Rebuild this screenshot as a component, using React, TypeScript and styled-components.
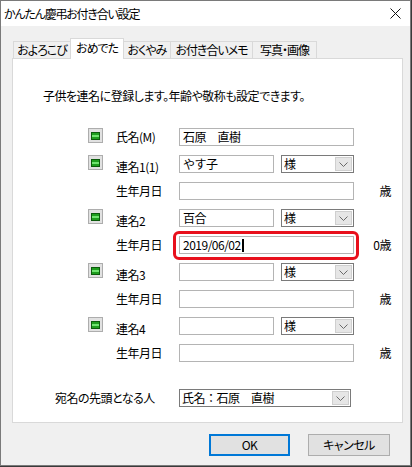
import React from "react";
import styled, { createGlobalStyle } from "styled-components";

const GlobalStyle = createGlobalStyle`
  html, body {
    margin: 0;
    padding: 0;
    background: #3a3a3a;
  }
  body {
    font-family: "Noto Sans CJK JP", "Liberation Sans", sans-serif;
    font-size: 12px;
    letter-spacing: -0.5px;
    color: #000;
  }
`;

const Window = styled.div`
  width: 411px;
  height: 466px;
  box-sizing: border-box;
  border: 1px solid #7a7a7a;
  background: #f0f0f0;
  display: flex;
  flex-direction: column;
`;

const TitleBar = styled.div`
  height: 25px;
  background: #fff;
  display: flex;
  align-items: center;
  justify-content: space-between;
  padding: 0 9px 0 3px;
`;

const Title = styled.span`
  font-size: 12px;
  letter-spacing: -1.2px;
  font-feature-settings: "palt";
  line-height: 16px;
`;

const Content = styled.div`
  padding: 12px 7px 0 11px;
`;

const TabStrip = styled.div`
  display: flex;
  align-items: flex-end;
  height: 20px;
  padding-left: 2px;
  position: relative;
  z-index: 1;
`;

const Tab = styled.div<{ $w: number; $active?: boolean }>`
  width: ${(p) => p.$w}px;
  height: ${(p) => (p.$active ? 21 : 17)}px;
  margin-bottom: ${(p) => (p.$active ? -1 : 0)}px;
  margin-left: -1px;
  box-sizing: border-box;
  border: 1px solid #d9d9d9;
  border-bottom: none;
  background: ${(p) => (p.$active ? "#fff" : "#f0f0f0")};
  display: flex;
  align-items: ${(p) => (p.$active ? "flex-start" : "center")};
  justify-content: center;
  padding-top: ${(p) => (p.$active ? 1 : 0)}px;
  font-feature-settings: "palt";
  letter-spacing: -1px;
  line-height: 16px;
  white-space: nowrap;
`;

const Panel = styled.div`
  height: 365px;
  box-sizing: border-box;
  border: 1px solid #d9d9d9;
  background: #fff;
  padding-top: 29px;
`;

const Description = styled.div`
  padding-left: 30px;
  line-height: 16px;
  font-feature-settings: "palt";
`;

const Form = styled.div`
  margin-top: 24px;
  display: flex;
  flex-direction: column;
  gap: 9px;
`;

const Row = styled.div`
  display: flex;
  align-items: center;
  height: 18px;
  padding-left: 75px;
`;

const IconSlot = styled.div`
  width: 15px;
  height: 15px;
  margin-right: 13px;
  align-self: flex-start;
  display: flex;
`;

const Label = styled.div<{ $drop?: boolean }>`
  width: 63px;
  line-height: 16px;
  margin-top: ${(p) => (p.$drop ? 6 : 0)}px;
  font-feature-settings: "palt";
  white-space: nowrap;
`;

const FieldArea = styled.div`
  width: 175px;
  display: flex;
  justify-content: space-between;
  position: relative;
`;

const Field = styled.div<{ $w?: number }>`
  width: ${(p) => (p.$w ? `${p.$w}px` : "100%")};
  height: 18px;
  box-sizing: border-box;
  border: 1px solid #b4b4b4;
  background: #fff;
  padding: 0 3px;
  display: flex;
  align-items: center;
  line-height: 16px;
  white-space: nowrap;
`;

const Caret = styled.span`
  display: inline-block;
  width: 2px;
  height: 13px;
  background: #000;
  margin-left: 1px;
`;

const Highlight = styled.div`
  position: absolute;
  left: -6px;
  right: -5px;
  top: -5px;
  bottom: -6px;
  border: 3px solid #e8101c;
  border-radius: 6px;
  pointer-events: none;
`;

const Combo = styled.div<{ $w: number }>`
  width: ${(p) => p.$w}px;
  height: 18px;
  box-sizing: border-box;
  border: 1px solid #7a7a7a;
  background: #fff;
  display: flex;
  align-items: center;
  justify-content: space-between;
  padding-left: 2px;
  line-height: 16px;
  white-space: nowrap;
`;

const DropButton = styled.div`
  width: 17px;
  height: 14px;
  margin-right: 1px;
  box-sizing: border-box;
  border: 1px solid #cfcfcf;
  background: #e6e6e6;
  display: flex;
  align-items: center;
  justify-content: center;
`;

const Age = styled.div`
  width: 37px;
  text-align: right;
  line-height: 16px;
`;

const LeadRow = styled.div`
  display: flex;
  align-items: center;
  height: 18px;
  margin-top: 27px;
  padding-left: 42px;
`;

const LeadLabel = styled.div`
  width: 124px;
  line-height: 16px;
  font-feature-settings: "palt";
`;

const Footer = styled.div`
  display: flex;
  justify-content: flex-end;
  gap: 18px;
  padding-right: 13px;
  margin-top: 11px;
`;

const Button = styled.div<{ $primary?: boolean }>`
  width: ${(p) => (p.$primary ? 81 : 82)}px;
  height: 22px;
  box-sizing: border-box;
  border: ${(p) => (p.$primary ? "2px solid #0078d7" : "1px solid #adadad")};
  background: #e1e1e1;
  display: flex;
  align-items: center;
  justify-content: center;
  line-height: 16px;
  font-feature-settings: "palt";
`;

const CloseIcon = () => (
  <svg width="11" height="11" viewBox="0 0 11 11">
    <path d="M0.5 0.5 L10.5 10.5 M10.5 0.5 L0.5 10.5" stroke="#111" strokeWidth="1" />
  </svg>
);

const Chevron = () => (
  <svg width="9" height="5" viewBox="0 0 9 5">
    <polyline points="0.5,0.5 4.5,4.5 8.5,0.5" fill="none" stroke="#6a6a6a" strokeWidth="1" />
  </svg>
);

const GreenIcon = () => (
  <svg width="15" height="15" viewBox="0 0 15 15">
    <rect x="0.5" y="0.5" width="14" height="14" fill="#e1e1e1" stroke="#adadad" />
    <rect x="3.5" y="4.5" width="8" height="7" fill="#1e9e1e" stroke="#0b5a0b" />
    <rect x="4" y="7" width="7" height="2" fill="#6fe36f" />
  </svg>
);

const ComboBox = ({ w, text }: { w: number; text: string }) => (
  <Combo $w={w}>
    <span>{text}</span>
    <DropButton>
      <Chevron />
    </DropButton>
  </Combo>
);

type Person = {
  label: string;
  name: string;
  birth: string;
  age: string;
  caret?: boolean;
};

const people: Person[] = [
  { label: "連名1(1)", name: "やす子", birth: "", age: "歳" },
  { label: "連名2", name: "百合", birth: "2019/06/02", age: "0歳", caret: true },
  { label: "連名3", name: "", birth: "", age: "歳" },
  { label: "連名4", name: "", birth: "", age: "歳" },
];

function App() {
  return (
    <>
      <GlobalStyle />
      <Window>
        <TitleBar>
          <Title>かんたん慶弔お付き合い設定</Title>
          <CloseIcon />
        </TitleBar>
        <Content>
          <TabStrip>
            <Tab $w={58}>およろこび</Tab>
            <Tab $w={54} $active>おめでた</Tab>
            <Tab $w={48}>おくやみ</Tab>
            <Tab $w={83}>お付き合いメモ</Tab>
            <Tab $w={65}>写真・画像</Tab>
          </TabStrip>
          <Panel>
            <Description>子供を連名に登録します。年齢や敬称も設定できます。</Description>
            <Form>
              <Row>
                <IconSlot>
                  <GreenIcon />
                </IconSlot>
                <Label>氏名(M)</Label>
                <FieldArea>
                  <Field>石原　直樹</Field>
                </FieldArea>
              </Row>
              {people.map((p) => (
                <React.Fragment key={p.label}>
                  <Row>
                    <IconSlot>
                      <GreenIcon />
                    </IconSlot>
                    <Label $drop>{p.label}</Label>
                    <FieldArea>
                      <Field $w={95}>{p.name}</Field>
                      <ComboBox w={73} text="様" />
                    </FieldArea>
                  </Row>
                  <Row>
                    <IconSlot />
                    <Label>生年月日</Label>
                    <FieldArea>
                      <Field>
                        {p.birth}
                        {p.caret && <Caret />}
                      </Field>
                      {p.caret && <Highlight />}
                    </FieldArea>
                    <Age>{p.age}</Age>
                  </Row>
                </React.Fragment>
              ))}
            </Form>
            <LeadRow>
              <LeadLabel>宛名の先頭となる人</LeadLabel>
              <ComboBox w={172} text="氏名：石原　直樹" />
            </LeadRow>
          </Panel>
          <Footer>
            <Button $primary>OK</Button>
            <Button>キャンセル</Button>
          </Footer>
        </Content>
      </Window>
    </>
  );
}

export default App;
